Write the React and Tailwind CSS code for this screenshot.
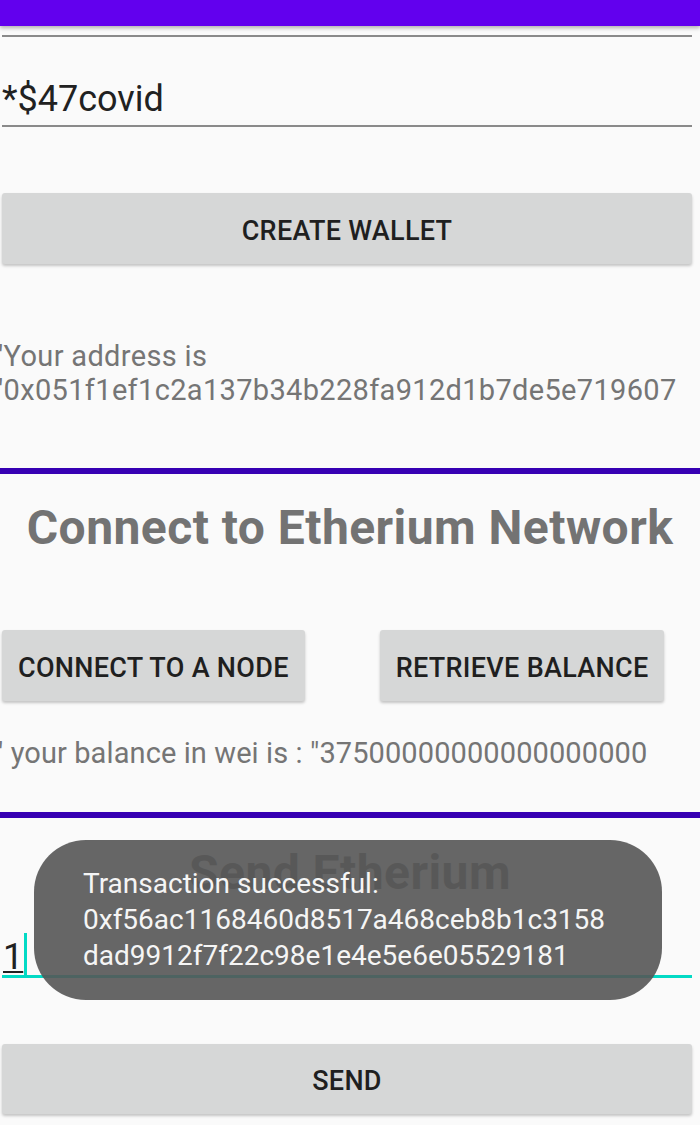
import React from 'react';

const font = { fontFamily: 'Roboto, "Noto Sans", sans-serif' };

function GrayButton({ children, className = '' }) {
  return (
    <div
      className={`flex items-center justify-center pt-[5px] bg-[#d6d7d7] rounded-[3px] shadow-[0_2px_3px_rgba(0,0,0,0.22)] text-[27px] font-medium tracking-[0.3px] text-[#1f1f1f] ${className}`}
    >
      {children}
    </div>
  );
}

export default function App() {
  return (
    <div className="w-[700px] h-[1125px] bg-[#fafafa] overflow-hidden relative" style={font}>
      {/* action bar, scrolled away */}
      <div className="h-[26px] bg-[#6200ee] shadow-[0_2px_4px_rgba(0,0,0,0.3)] relative z-10" />

      {/* previous field underline */}
      <div className="mt-[9px] ml-[2px] w-[690px] h-[2px] bg-[#8a8a8a]" />

      {/* password field */}
      <div className="mt-[40px] pl-[2px] text-[36px] leading-[44px] text-[#212121]">*$47covid</div>
      <div className="mt-[4px] ml-[2px] w-[690px] h-[2px] bg-[#8a8a8a]" />

      <GrayButton className="mt-[66px] ml-[2px] w-[690px] h-[71px]">CREATE WALLET</GrayButton>

      {/* address */}
      <div className="mt-[75px] overflow-hidden text-[29px] leading-[34px] tracking-[0.33px] text-[#757575] whitespace-nowrap">
        <div className="-ml-[6px]">"Your address is</div>
        <div className="-ml-[6px]">"0x051f1ef1c2a137b34b228fa912d1b7de5e719607</div>
      </div>

      <div className="mt-[61px] h-[6px] bg-[#3700b3]" />

      <h2 className="mt-[26px] text-center text-[48px] leading-[56px] font-bold tracking-[0.45px] text-[#737373]">
        Connect to Etherium Network
      </h2>

      <div className="mt-[74px] flex pl-[2px]">
        <GrayButton className="h-[71px] px-[16px]">CONNECT TO A NODE</GrayButton>
        <GrayButton className="ml-[75px] h-[71px] px-[16px]">RETRIEVE BALANCE</GrayButton>
      </div>

      <div className="mt-[35px] overflow-hidden text-[29px] leading-[34px] tracking-[0.1px] text-[#757575] whitespace-nowrap">
        <div className="-ml-[6px]">" your balance in wei is : "37500000000000000000</div>
      </div>

      <div className="mt-[42px] h-[6px] bg-[#3700b3]" />

      <h2 className="mt-[27px] text-center text-[48px] leading-[56px] font-bold tracking-[0.45px] text-[#737373]">
        Send Etherium
      </h2>

      {/* amount field, focused */}
      <div className="mt-[29px] pl-[3px] flex items-end h-[45px]">
        <span className="text-[36px] leading-[36px] text-[#212121] underline decoration-[2px] underline-offset-[2px]">1</span>
        <span className="ml-[1px] w-[3px] h-[42px] bg-[#03dac5]" />
      </div>
      <div className="ml-[2px] w-[690px] h-[3px] bg-[#03dac5]" />

      <GrayButton className="mt-[66px] ml-[2px] w-[690px] h-[70px]">SEND</GrayButton>

      {/* toast */}
      <div className="absolute left-[34px] top-[840px] w-[628px] h-[160px] rounded-[52px] bg-[#555555]/90 pl-[49px] pt-[26px] text-[28px] leading-[36px] text-[#f5f5f5]">
        <div>Transaction successful:</div>
        <div>0xf56ac1168460d8517a468ceb8b1c3158</div>
        <div>dad9912f7f22c98e1e4e5e6e05529181</div>
      </div>
    </div>
  );
}
